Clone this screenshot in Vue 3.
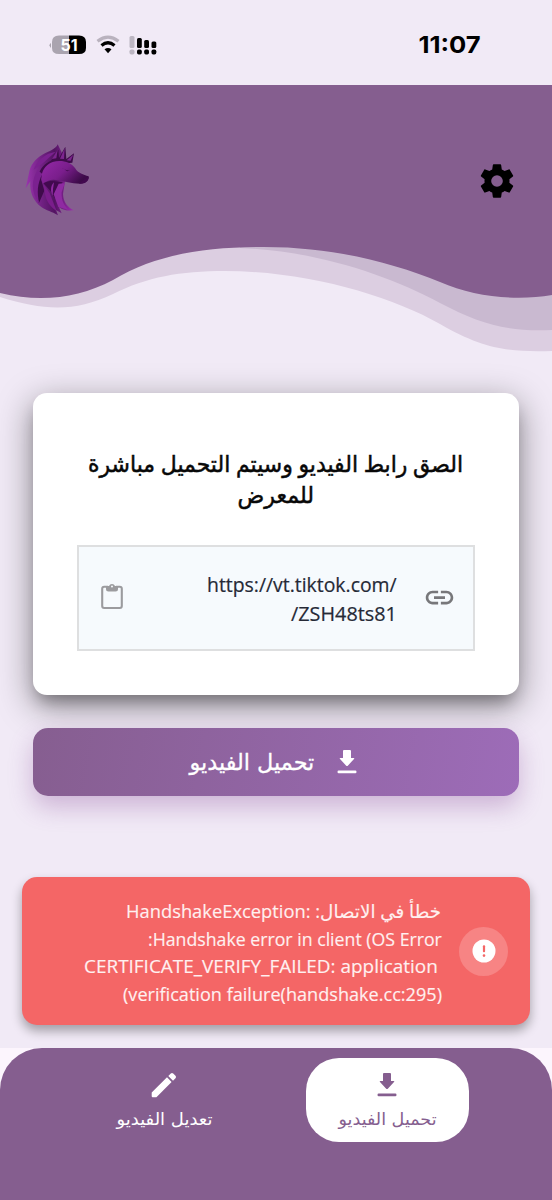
<script setup>
const headingLines = [
  { text: 'الصق رابط الفيديو وسيتم التحميل مباشرة', width: 375 },
  { text: 'للمعرض', width: 77 },
]
const urlLines = [
  { text: 'https://vt.tiktok.com/\u200E', width: 190 },
  { text: 'ZSH48ts81/', width: 106 },
]
const errorLines = [
  { text: 'خطأ في الاتصال: HandshakeException:\u200E', width: 315 },
  { text: 'Handshake error in client (OS Error:', width: 294 },
  { text: 'CERTIFICATE_VERIFY_FAILED: application', width: 354, trailing: true },
  { text: 'verification failure(handshake.cc:295)\u200E)', width: 319 },
]

// Condenses or widens a single line so that it takes the given width.
const vFit = {
  mounted(el, { value }) {
    el.style.transform = `scaleX(${value / el.offsetWidth})`
  },
}
</script>

<template>
  <div class="screen" dir="rtl" lang="ar">
    <div class="status" dir="ltr">
      <svg class="indicators" width="110" height="24" viewBox="0 0 110 24">
        <path d="M2 10q-3 2 0 5z" fill="#aaa4af" />
        <path d="M20 2.500H10q-7 0-7 6.500v6q0 6 7 6h10z" fill="#aaa4af" />
        <path d="M20 2.500h10q7 0 7 6.500v6q0 6-7 6H20z" fill="#000" />
        <text x="20" y="17.500" text-anchor="middle" class="battery">51</text>
        <g fill="none" stroke-width="3.200">
          <path d="M48.500 8.200Q59 0 69.500 8.200" stroke="#b9b2be" />
          <path d="M52.500 12.500Q59 7 65.500 12.500" stroke="#000" />
        </g>
        <path d="M55.500 16.300Q59 13.500 62.500 16.300L59 20.300z" fill="#000" />
        <g fill="#bcb6c2">
          <rect x="80.500" y="3" width="5" height="12" rx="1.500" />
          <rect x="80.500" y="16.500" width="5" height="5" rx="1.800" />
        </g>
        <rect x="88" y="5" width="4.800" height="10" rx="1.500" />
        <rect x="95.200" y="7" width="4.800" height="8" rx="1.500" />
        <rect x="102.500" y="8.500" width="4.800" height="6.500" rx="1.500" />
        <rect x="88" y="16.500" width="4.800" height="5" rx="1.700" />
        <rect x="95.200" y="16.500" width="4.800" height="5" rx="1.700" />
        <rect x="102.500" y="16.500" width="4.800" height="5" rx="1.700" />
      </svg>
      <span class="clock"><span v-fit="62" class="fit">11:07</span></span>
    </div>

    <header class="hero">
      <svg class="waves" width="552" height="268" viewBox="0 85 552 268">
        <path fill="#dccee1" d="M0 85V297C45 311 75 312 113 294C147 277 180 271 225 271C307 271 391 296 440 324C485 350 510 352 552 351V85z" />
        <path fill="#c9b9d0" d="M240 85V248C317 251 388 275 440 303C480 324 507 332 552 330V85z" />
        <path fill="#855e8f" d="M0 85V293C41 303 79 298 113 280C156 254 206 247 264 247C334 247 393 263 440 282C474 297 516 301 552 295V85z" />
      </svg>
      <div class="toolbar">
        <svg class="gear" width="40" height="40" viewBox="0 0 24 24">
          <path d="M19.430 12.980c.04-.32.07-.64.07-.98s-.03-.66-.07-.98l2.110-1.650c.19-.15.24-.42.12-.64l-2-3.460c-.12-.22-.39-.3-.61-.22l-2.490 1c-.52-.4-1.080-.73-1.690-.98l-.38-2.650A.49.49 0 0 0 14 2h-4c-.25 0-.46.18-.49.42l-.38 2.650c-.61.25-1.170.59-1.690.98l-2.490-1c-.23-.09-.49 0-.61.22l-2 3.460c-.13.22-.07.49.12.64l2.110 1.650c-.04.32-.07.65-.07.98s.03.66.07.98l-2.110 1.650c-.19.15-.24.42-.12.64l2 3.460c.12.22.39.3.61.22l2.490-1c.52.4 1.080.73 1.690.98l.38 2.650c.03.24.24.42.49.42h4c.25 0 .46-.18.49-.42l.38-2.650c.61-.25 1.170-.59 1.690-.98l2.490 1c.23.09.49 0 .61-.22l2-3.460c.12-.22.07-.49-.12-.64zM12 15.500a3.500 3.500 0 1 1 0-7 3.500 3.500 0 0 1 0 7z" />
        </svg>
        <svg class="logo" width="67" height="74" viewBox="18 30 201 222">
          <defs>
            <linearGradient id="mane" x1="0" y1="0" x2="1" y2="0">
              <stop offset="0" stop-color="#9a35ae" />
              <stop offset=".35" stop-color="#6f2081" />
              <stop offset=".6" stop-color="#531462" />
              <stop offset="1" stop-color="#a02bb2" />
            </linearGradient>
            <linearGradient id="face" x1="0" y1="0" x2="1" y2=".5">
              <stop offset="0" stop-color="#9529a8" />
              <stop offset=".55" stop-color="#7a1e8c" />
              <stop offset="1" stop-color="#3d0b49" />
            </linearGradient>
          </defs>
          <path fill="url(#mane)" d="M116 31C111 45 92 51 70 62C47 76 34 93 30 117L20 163L34 142C31 174 43 202 67 219C82 230 98 232 117 244L111 228L128 238L119 218C134 230 146 230 164 229C145 219 133 204 132 180L138 142L120 80L133 65z" />
          <path fill="#3f0b4b" d="M96 80L118 47L120 72L139 38L142 75L165 58L160 86L120 90L84 99L66 135L76 170L60 207C46 181 47 151 56 127C64 101 79 88 96 80z" />
          <path fill="#7d258f" d="M99 75L116 48L112 73zM123 74L137 43L135 75zM143 79L163 62L155 80z" />
          <path fill="#7b2190" d="M56 108C38 135 34 174 61 208C53 176 55 149 70 120zM88 59C66 70 51 88 44 107L73 86L110 53z" />
          <path fill="url(#face)" d="M68 139C65 115 77 93 101 84C127 76 155 84 168 102C178 119 193 121 209 127C210 139 199 147 183 149C156 149 135 142 119 139C98 134 82 139 72 150z" />
          <path fill="#42094f" d="M73 148C93 136 112 142 131 145L116 166L107 192C101 177 87 163 73 148zM128 101C136 108 147 110 154 109L145 112zM192 139L209 128C211 141 197 151 180 149z" />
          <path fill="#7a1d8b" d="M73 150L92 178L113 231C94 219 82 202 78 180z" />
          <path fill="#8f2aa2" d="M119 149L104 181L118 219L150 228C136 216 127 202 128 175L137 148zM105 145C94 157 94 171 101 185L102 165z" />
        </svg>
      </div>
    </header>

    <main>
      <section class="card">
        <h1>
          <span v-for="l in headingLines" :key="l.text" class="line center"><span v-fit="l.width" class="fit">{{ l.text }}</span></span>
        </h1>
        <div class="field">
          <svg class="link" width="33" height="33" viewBox="0 0 24 24" fill="#77777a">
            <path d="M3.900 12c0-1.710 1.390-3.100 3.100-3.100h4V7H7c-2.760 0-5 2.240-5 5s2.240 5 5 5h4v-1.900H7c-1.710 0-3.100-1.390-3.100-3.100zM8 13h8v-2H8v2zm9-6h-4v1.900h4c1.710 0 3.100 1.390 3.100 3.100s-1.390 3.100-3.100 3.100h-4V17h4c2.760 0 5-2.240 5-5s-2.240-5-5-5z" />
          </svg>
          <p class="url">
            <span v-for="l in urlLines" :key="l.text" class="line"><span v-fit="l.width" class="fit">{{ l.text }}</span></span>
          </p>
          <svg class="paste" width="22" height="27" viewBox="0 0 22 27">
            <path d="M7 3.700H3.200Q1.200 3.700 1.200 5.700V23Q1.200 25 3.200 25H18.800Q20.800 25 20.800 23V5.700Q20.800 3.700 18.800 3.700H15" fill="none" stroke="#9b9b9e" stroke-width="2.100" />
            <path fill="#9b9b9e" fill-rule="evenodd" d="M5 3H8a3.200 3.200 0 0 1 6 0h3V6Q17 8.500 14.500 8.500H7.500Q5 8.500 5 6zM11 2.500a1 1 0 1 0 0 2a1 1 0 0 0 0-2z" />
          </svg>
        </div>
      </section>

      <button class="download">
        <svg width="20" height="26" viewBox="0 0 20 26" fill="#fff">
          <path d="M7 1h6q1 0 1 1v7h2.500q1.500 0 .5 1l-6.200 6.700q-.8.800-1.600 0L3 10q-1-1 .5-1H6V2q0-1 1-1z" />
          <rect x=".5" y="21.500" width="19" height="2.800" rx="1.200" />
        </svg>
        <span class="slot"><span v-fit="125" class="fit">تحميل الفيديو</span></span>
      </button>

      <section class="error">
        <div class="badge">
          <svg width="24" height="24" viewBox="0 0 24 24">
            <circle cx="12" cy="12" r="11.500" fill="#fff" />
            <rect x="10.900" y="6.300" width="2.200" height="7" rx="1" fill="#f46666" />
            <circle cx="12" cy="16.600" r="1.300" fill="#f46666" />
          </svg>
        </div>
        <p>
          <span v-for="l in errorLines" :key="l.text" class="line" :class="{ trailing: l.trailing }"><span v-fit="l.width" class="fit">{{ l.text }}</span></span>
        </p>
      </section>
    </main>

    <nav>
      <div class="bar">
        <a class="tab active">
          <svg width="20" height="26" viewBox="0 0 20 26" fill="#855e8f">
            <path d="M7 1h6q1 0 1 1v7h2.500q1.500 0 .5 1l-6.200 6.700q-.8.800-1.600 0L3 10q-1-1 .5-1H6V2q0-1 1-1z" />
            <rect x=".5" y="21.500" width="19" height="2.800" rx="1.200" />
          </svg>
          <span class="label"><span v-fit="98" class="fit">تحميل الفيديو</span></span>
        </a>
        <a class="tab">
          <svg width="26" height="26" viewBox="0 0 26 26" fill="#fff">
            <path d="M.700 20.600L16 5.300L20.600 9.900L5.400 25.200H1.700Q.700 25.200.700 24.200zM17.300 4L19.800 1.500Q21 .3 22.200 1.500L24.500 3.800Q25.700 5 24.500 6.200L22 8.700z" />
          </svg>
          <span class="label"><span v-fit="96" class="fit">تعديل الفيديو</span></span>
        </a>
      </div>
    </nav>
  </div>
</template>

<style>
body {
  margin: 0;
}
</style>

<style scoped>
.screen {
  height: 1200px;
  display: flex;
  flex-direction: column;
  overflow: hidden;
  background: #f1eaf6;
  font-family: "Open Sans", "DejaVu Sans", sans-serif;
}
.status {
  height: 85px;
  flex: none;
  box-sizing: border-box;
  padding: 0 71px 0 49px;
  display: flex;
  align-items: center;
  justify-content: space-between;
}
.indicators {
  margin-top: 4px;
}
.battery {
  font: 700 16px Inter, sans-serif;
  fill: #fff;
}
.clock {
  width: 62px;
  display: flex;
  justify-content: center;
  margin-top: 5px;
  font: 700 23.500px/30px Inter, sans-serif;
}
.fit {
  display: inline-block;
  flex: none;
  white-space: nowrap;
}
.hero {
  display: grid;
  height: 268px;
  flex: none;
}
.waves,
.toolbar {
  grid-area: 1 / 1;
}
.toolbar {
  z-index: 1;
  align-self: start;
  box-sizing: border-box;
  padding: 59px 35px 0 25px;
  display: flex;
  justify-content: space-between;
  align-items: center;
}
main {
  flex: 1;
  padding: 40px 22px 0;
}
.card {
  height: 302px;
  margin: 0 11px;
  box-sizing: border-box;
  padding: 54px 44px 0;
  border-radius: 14px;
  background: #fff;
  box-shadow: 0 11px 16px -5px rgba(0, 0, 0, .3), 0 10px 34px 2px rgba(0, 0, 0, .38);
}
h1 {
  margin: 0 0 35px;
  font-size: 23px;
  font-weight: 400;
  color: #080808;
  -webkit-text-stroke: .5px #080808;
}
.line {
  display: flex;
  justify-content: flex-start;
}
.line .fit {
  transform-origin: right center;
}
.center {
  justify-content: center;
}
.center .fit {
  transform-origin: center;
}
h1 .line {
  height: 31.500px;
  align-items: center;
}
h1 .fit {
  margin-right: 1px;
}
.field {
  height: 106px;
  box-sizing: border-box;
  border: 2px solid #dedfe0;
  background: #f6fafd;
  display: flex;
  align-items: center;
  padding: 0 16px 0 22px;
}
.link {
  margin: -1px 1px 0 -1px;
}
.paste {
  margin-top: -3px;
}
.url {
  flex: 1;
  margin: 2px 27px 0 0;
  font-size: 20px;
  color: #252936;
  -webkit-text-stroke: .2px #252936;
}
.url .line {
  height: 29px;
  line-height: 29px;
}
.download {
  position: relative;
  width: 486px;
  height: 68px;
  margin: 33px 11px 0;
  border: 0;
  border-radius: 15px;
  display: flex;
  align-items: center;
  padding: 0 162px 0 0;
  gap: 23px;
  color: #fff;
  font: 22.500px "DejaVu Sans", sans-serif;
  -webkit-text-stroke: .3px #fff;
  background: linear-gradient(100deg, #865e90, #9d6cb8);
  box-shadow: 0 11px 24px rgba(134, 70, 148, .33);
}
.slot {
  width: 125px;
  display: flex;
  justify-content: center;
}
.error {
  height: 148px;
  margin-top: 81px;
  border-radius: 15px;
  background: #f46666;
  box-shadow: 0 6px 11px rgba(0, 0, 0, .33);
  display: flex;
  align-items: center;
  padding-right: 22px;
  gap: 17px;
}
.badge {
  width: 49px;
  height: 49px;
  border-radius: 50%;
  background: #f78484;
  display: grid;
  place-items: center;
}
.error p {
  margin: 2px 0 0;
  width: 358px;
  font-size: 18.500px;
  color: #fff0f0;
  -webkit-text-stroke: .15px #fff0f0;
}
.error .line {
  height: 27.500px;
  line-height: 27.500px;
}
.error .line .fit {
  margin-right: .5px;
}
.trailing {
  padding-right: 4px;
}
nav {
  height: 152px;
  flex: none;
  background: #fcf5fd;
}
.bar {
  height: 100%;
  box-sizing: border-box;
  border-radius: 42px 42px 0 0;
  background: #855e8f;
  display: flex;
  align-items: flex-start;
  padding: 10px 83px 0;
  gap: 60px;
}
.tab {
  width: 163px;
  height: 84px;
  box-sizing: border-box;
  padding: 14px 1px 0 0;
  border-radius: 33px;
  display: flex;
  flex-direction: column;
  align-items: center;
  color: #fff;
}
.active {
  background: #fff;
  color: #855e8f;
}
.label {
  width: 100px;
  display: flex;
  justify-content: center;
  margin-top: 9px;
  font: 17px/24px "DejaVu Sans", sans-serif;
}
</style>
